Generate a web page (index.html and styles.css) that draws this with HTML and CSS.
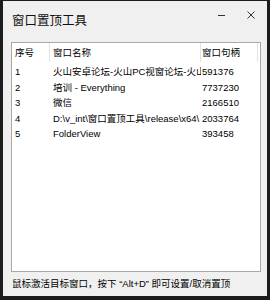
FILE: index.html
```html
<!DOCTYPE html>
<html>
<head>
<meta charset="utf-8">
<link rel="stylesheet" href="styles.css">
</head>
<body>
<div class="window">
  <div class="titlebar">
    <div class="title">窗口置顶工具</div>
    <div class="controls">
      <span class="min"></span>
      <svg class="close" width="8" height="8" viewBox="0 0 8 8"><path d="M0.5 0.5L7.5 7.5M7.5 0.5L0.5 7.5" stroke="#333" stroke-width="1" fill="none"/></svg>
    </div>
  </div>
  <div class="list">
    <div class="header">
      <div class="hcell">序号</div>
      <div class="hcell">窗口名称</div>
      <div class="hcell last">窗口句柄</div>
    </div>
    <div class="rows">
      <div class="row"><div class="c1">1</div><div class="c2">火山安卓论坛-火山PC视窗论坛-火山论坛</div><div class="c3">591376</div></div>
      <div class="row"><div class="c1">2</div><div class="c2"><span class="cjk">培训</span> - Everything</div><div class="c3">7737230</div></div>
      <div class="row"><div class="c1">3</div><div class="c2">微信</div><div class="c3">2166510</div></div>
      <div class="row"><div class="c1">4</div><div class="c2">D:\v_int\窗口置顶工具\release\x64\</div><div class="c3">2033764</div></div>
      <div class="row"><div class="c1">5</div><div class="c2">FolderView</div><div class="c3">393458</div></div>
    </div>
  </div>
  <div class="status">鼠标激活目标窗口，按下 “Alt+D” 即可设置/取消置顶</div>
</div>
</body>
</html>
```
FILE: styles.css
```css
html, body {
  margin: 0;
  padding: 0;
}
.window {
  width: 270px;
  height: 300px;
  box-sizing: border-box;
  border-style: solid;
  border-color: #1c1c1c;
  border-width: 1px 3px 4px 3px;
  background: #f0f0f0;
  display: flex;
  flex-direction: column;
  font-family: "Liberation Sans", "Noto Sans CJK SC", sans-serif;
  color: #000;
}
.titlebar {
  height: 41px;
  display: flex;
  justify-content: space-between;
  box-sizing: border-box;
  padding: 11px 0 0 9px;
}
.title {
  font-family: "Noto Sans CJK SC", sans-serif;
  font-size: 12.5px;
  line-height: 16px;
  color: #111;
}
.controls {
  display: flex;
  align-items: center;
  height: 8px;
  margin-top: -1px;
  padding-right: 12px;
}
.min {
  width: 7px;
  height: 1px;
  background: #333;
  margin-right: 22px;
}
.list {
  margin-left: 8px;
  width: 250px;
  height: 230px;
  box-sizing: border-box;
  border: 1px solid #a9a9a9;
  background: #fff;
  font-size: 9.5px;
}
.header, .row {
  display: grid;
  grid-template-columns: 38px 151px 1fr;
}
.header {
  height: 19px;
  line-height: 19px;
}
.hcell {
  border-right: 1px solid #e3e3e3;
  padding-left: 3px;
  white-space: nowrap;
  overflow: hidden;
}
.hcell.last {
  padding-left: 1px;
  margin-right: 2px;
}
.rows {
  padding-top: 2px;
}
.row {
  line-height: 15.5px;
}
.c1, .c2 {
  padding-left: 3px;
  white-space: nowrap;
  overflow: hidden;
}
.c2 {
  padding-right: 1px;
}
.c3 {
  padding-left: 1px;
  white-space: nowrap;
}
.cjk {
  font-family: "Noto Sans CJK JP", "Noto Sans CJK SC", sans-serif;
  color: #000;
}
.status {
  padding: 5px 0 0 9px;
  font-size: 9.5px;
  line-height: 14px;
  white-space: nowrap;
}
```
